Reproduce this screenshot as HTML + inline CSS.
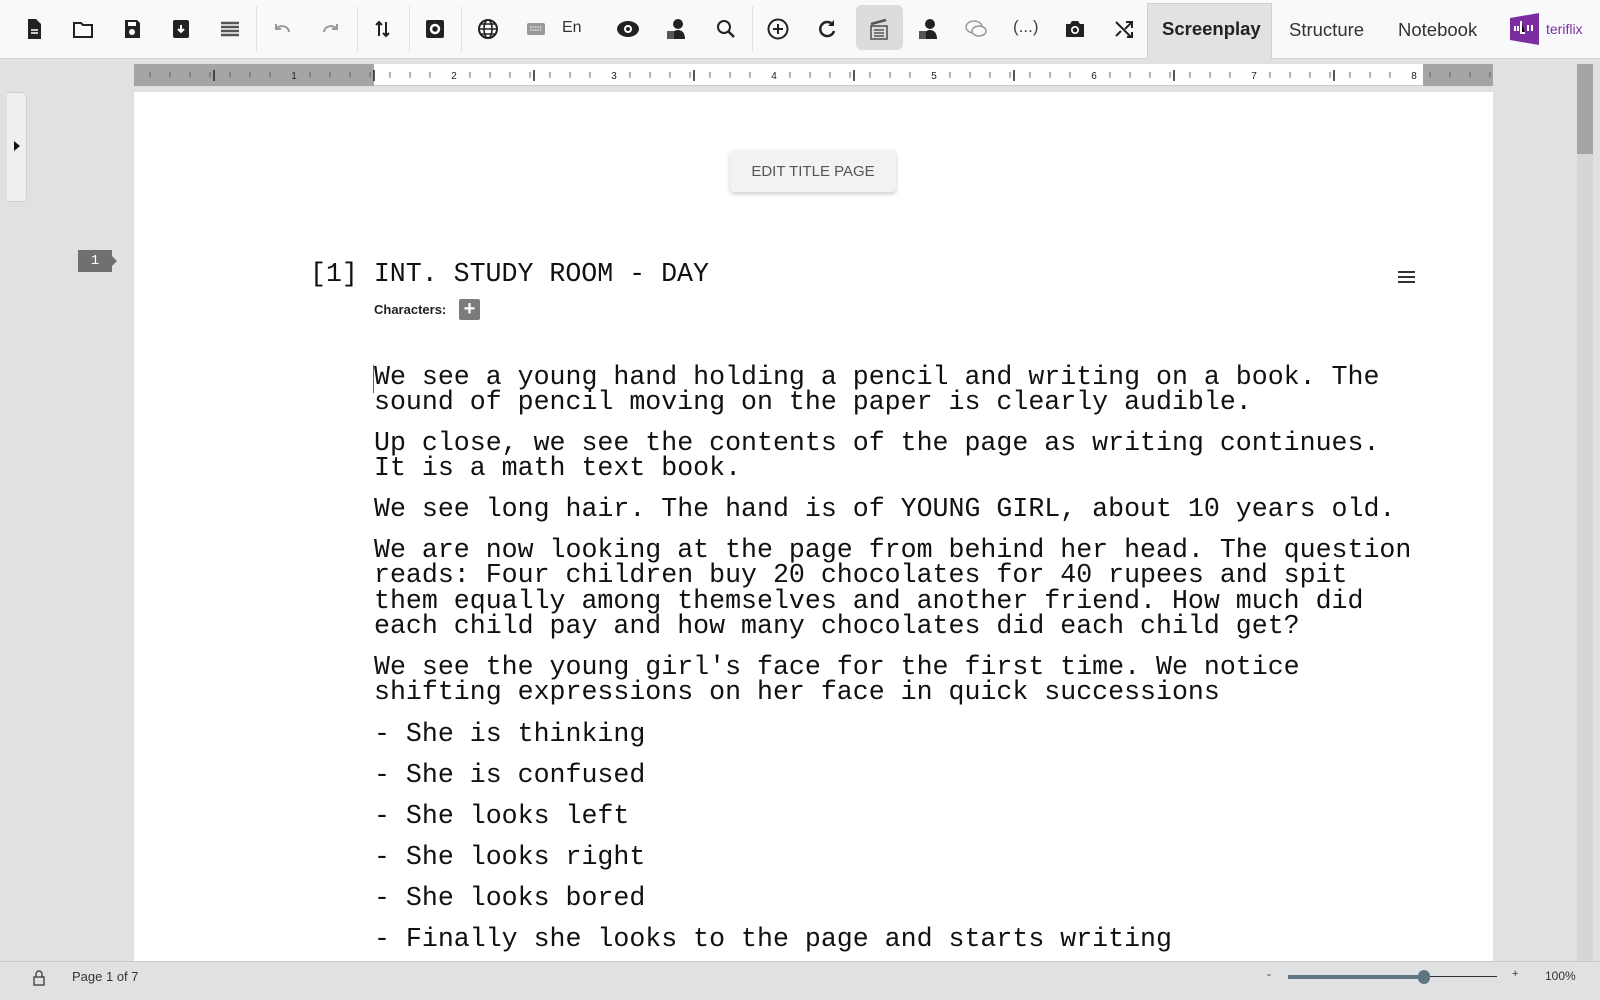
<!DOCTYPE html>
<html><head><meta charset="utf-8"><style>
*{margin:0;padding:0;box-sizing:border-box}
body{width:1600px;height:1000px;overflow:hidden;background:#e0e1e3;font-family:"Liberation Sans",sans-serif;position:relative}
.tb{position:absolute;left:0;top:0;width:1600px;height:59px;background:#f8f9fa;border-bottom:1px solid #d4d4d4}
.ic{position:absolute;top:17px;width:24px;height:24px}
.sep{position:absolute;top:6px;width:1px;height:46px;background:#e2e2e2}
.mono{font-family:"Liberation Mono",monospace;font-size:26.6px;color:#111}
.p{position:absolute;left:374px;white-space:pre;line-height:25.3px}
</style></head><body>
<div class="tb">
<svg class="ic" style="left:22px" viewBox="0 0 24 24"><path d="M6 2h8l5 5v15H6z" fill="#222"/><path d="M9 13h7M9 16h7" stroke="#fff" stroke-width="1.5"/></svg>
<svg class="ic" style="left:71px" viewBox="0 0 24 24"><path d="M3 6h7l2 2h9v12H3z" fill="none" stroke="#222" stroke-width="2"/></svg>
<svg class="ic" style="left:120px" viewBox="0 0 24 24"><path d="M5 3h12l3 3v15H5z" fill="#222"/><circle cx="12" cy="15" r="3" fill="#fff"/><rect x="8" y="5" width="8" height="4" fill="#fff"/></svg>
<svg class="ic" style="left:169px" viewBox="0 0 24 24"><rect x="4" y="3" width="16" height="18" rx="2" fill="#222"/><path d="M12 8v7M9 12l3 3 3-3" stroke="#fff" stroke-width="2" fill="none"/></svg>
<svg class="ic" style="left:218px" viewBox="0 0 24 24"><path d="M3 6h18M3 10h18M3 14h18M3 18h18" stroke="#555" stroke-width="2.5"/></svg>
<div class="sep" style="left:256px"></div>
<svg class="ic" style="left:270px" viewBox="0 0 24 24"><path d="M6 12a7 6 0 0 1 13 3M6 7v5h5" stroke="#999" stroke-width="2" fill="none"/></svg>
<svg class="ic" style="left:319px" viewBox="0 0 24 24"><path d="M18 12a7 6 0 0 0-13 3M18 7v5h-5" stroke="#999" stroke-width="2" fill="none"/></svg>
<div class="sep" style="left:357px"></div>
<svg class="ic" style="left:371px" viewBox="0 0 24 24"><path d="M8 19V5M5 8l3-3 3 3M15 5v14M12 16l3 3 3-3" stroke="#222" stroke-width="2" fill="none"/></svg>
<div class="sep" style="left:409px"></div>
<svg class="ic" style="left:423px" viewBox="0 0 24 24"><rect x="3" y="3" width="18" height="18" rx="2" fill="#222"/><circle cx="12" cy="12" r="4" fill="none" stroke="#fff" stroke-width="2.5"/></svg>
<div class="sep" style="left:461px"></div>
<svg class="ic" style="left:476px" viewBox="0 0 24 24"><circle cx="12" cy="12" r="9" fill="none" stroke="#222" stroke-width="2"/><ellipse cx="12" cy="12" rx="4" ry="9" fill="none" stroke="#222" stroke-width="1.6"/><path d="M3 12h18M5 7h14M5 17h14" stroke="#222" stroke-width="1.6"/></svg>
<svg class="ic" style="left:524px" viewBox="0 0 24 24"><rect x="3" y="6" width="18" height="12" rx="2" fill="#999"/><path d="M6 10h12M6 13h12" stroke="#fff" stroke-width="1" stroke-dasharray="1.5 1"/></svg>
<div style="position:absolute;left:562px;top:19px;font-size:16px;color:#333">En</div>
<svg class="ic" style="left:616px" viewBox="0 0 24 24"><ellipse cx="12" cy="12" rx="11" ry="8" fill="#222"/><circle cx="12" cy="12" r="4" fill="#fff"/><circle cx="12" cy="12" r="2" fill="#222"/></svg>
<svg class="ic" style="left:664px" viewBox="0 0 24 24"><circle cx="14" cy="7" r="5" fill="#222"/><path d="M7 22c0-6 3-9 7-9s7 3 7 9z" fill="#222"/><rect x="3" y="14" width="7" height="8" fill="#555"/></svg>
<svg class="ic" style="left:714px" viewBox="0 0 24 24"><circle cx="10" cy="10" r="6" fill="none" stroke="#222" stroke-width="2"/><path d="M14 14l6 6" stroke="#222" stroke-width="2.5"/></svg>
<div class="sep" style="left:752px"></div>
<svg class="ic" style="left:766px" viewBox="0 0 24 24"><circle cx="12" cy="12" r="9.5" fill="none" stroke="#222" stroke-width="2"/><path d="M12 7v10M7 12h10" stroke="#222" stroke-width="2"/></svg>
<svg class="ic" style="left:815px" viewBox="0 0 24 24"><path d="M18 8a7 7 0 1 0 1 6" stroke="#222" stroke-width="2.5" fill="none"/><path d="M19 3v6h-6z" fill="#222"/></svg>
<div style="position:absolute;left:856px;top:5px;width:47px;height:45px;background:#dcdcdc;border-radius:6px"></div>
<svg class="ic" style="left:867px" viewBox="0 0 24 24"><rect x="4" y="9" width="16" height="13" fill="none" stroke="#555" stroke-width="1.6"/><path d="M7 13h10M7 16h10M7 19h10" stroke="#555" stroke-width="1.4"/><path d="M4 7l15-4" stroke="#555" stroke-width="2.5"/></svg>
<svg class="ic" style="left:916px" viewBox="0 0 24 24"><circle cx="14" cy="7" r="5" fill="#222"/><path d="M7 22c0-6 3-9 7-9s7 3 7 9z" fill="#222"/><rect x="3" y="14" width="7" height="8" fill="#555"/></svg>
<svg class="ic" style="left:964px" viewBox="0 0 24 24"><ellipse cx="10" cy="10" rx="8" ry="6" fill="none" stroke="#999" stroke-width="1.5"/><ellipse cx="15" cy="14" rx="7" ry="5" fill="#f8f9fa" stroke="#999" stroke-width="1.5"/></svg>
<div style="position:absolute;left:1013px;top:17px;font-size:17px;color:#444">(...)</div>
<svg class="ic" style="left:1063px" viewBox="0 0 24 24"><path d="M3 7h4l2-3h6l2 3h4v13H3z" fill="#222"/><circle cx="12" cy="13" r="4" fill="#fff"/><circle cx="12" cy="13" r="2.3" fill="#222"/></svg>
<svg class="ic" style="left:1112px" viewBox="0 0 24 24"><path d="M4 5l15 15M14 5h6v6M20 5L13 12M4 19l5-5M15 20h5v-5" stroke="#222" stroke-width="2" fill="none"/></svg>
<div style="position:absolute;left:1147px;top:3px;width:125px;height:56px;background:#e2e2e2;border:1px solid #d0d0d0;border-bottom:none"></div>
<div style="position:absolute;left:1162px;top:18px;font-size:18.5px;font-weight:bold;color:#222">Screenplay</div>
<div style="position:absolute;left:1289px;top:19px;font-size:18.5px;color:#333">Structure</div>
<div style="position:absolute;left:1398px;top:19px;font-size:18.5px;color:#333">Notebook</div>
<svg style="position:absolute;left:1510px;top:13px" width="29" height="32" viewBox="0 0 29 32"><path d="M0 5L29 0v32L0 27z" fill="#7c2ea1"/><path d="M5 13v5M8 13v5M11 8v12h4M18 12v6M22 12v6" stroke="#fff" stroke-width="2"/></svg>
<div style="position:absolute;left:1546px;top:21px;font-size:14px;color:#7c2ea1">teriflix</div>
</div>
<!-- ruler -->
<div style="position:absolute;left:134px;top:64px;width:1359px;height:22px;background:#fff;border-bottom:1px solid #ccc"></div>
<div style="position:absolute;left:134px;top:64px;width:240px;height:22px;background:#a4a5a7"></div>
<div style="position:absolute;left:1423px;top:64px;width:70px;height:22px;background:#a4a5a7"></div>
<svg style="position:absolute;left:134px;top:64px" width="1359" height="22">
<defs><pattern id="tk" x="0" y="0" width="20" height="22" patternUnits="userSpaceOnUse"><path d="M16 8v6" stroke="#666" stroke-width="1"/></pattern></defs>
<rect x="0" y="0" width="1359" height="22" fill="url(#tk)"/>
<g stroke="#222" stroke-width="1.5"><path d="M80 6v11M240 6v11M400 6v11M560 6v11M720 6v11M880 6v11M1040 6v11M1200 6v11"/></g>
<g font-size="10" fill="#222" font-family="Liberation Sans" text-anchor="middle">
<g fill="#fff"><rect x="154" y="4" width="12" height="13"/><rect x="314" y="4" width="12" height="13"/><rect x="474" y="4" width="12" height="13"/><rect x="634" y="4" width="12" height="13"/><rect x="794" y="4" width="12" height="13"/><rect x="954" y="4" width="12" height="13"/><rect x="1114" y="4" width="12" height="13"/><rect x="1274" y="4" width="12" height="13"/></g>
<rect x="154" y="4" width="12" height="13" fill="#a4a5a7"/>
<text x="160" y="15">1</text><text x="320" y="15">2</text><text x="480" y="15">3</text><text x="640" y="15">4</text><text x="800" y="15">5</text><text x="960" y="15">6</text><text x="1120" y="15">7</text><text x="1280" y="15">8</text>
</g></svg>
<!-- scrollbar -->
<div style="position:absolute;left:1577px;top:64px;width:16px;height:897px;background:#d6d6d8"></div>
<div style="position:absolute;left:1577px;top:64px;width:16px;height:90px;background:#a3a4a6"></div>
<!-- page -->
<div style="position:absolute;left:134px;top:92px;width:1359px;height:869px;background:#fff"></div>
<div style="position:absolute;left:7px;top:92px;width:20px;height:110px;background:#eeeff1;border:1px solid #d0d0d0;border-left:none;border-radius:0 5px 5px 0"></div>
<div style="position:absolute;left:14px;top:141px;border-left:6px solid #111;border-top:5px solid transparent;border-bottom:5px solid transparent"></div>
<div style="position:absolute;left:78px;top:250px;width:34px;height:22px;background:#6f7072;color:#fff;font-family:'Liberation Mono',monospace;font-size:14px;line-height:22px;text-align:center">1</div>
<div style="position:absolute;left:112px;top:256px;border-left:5px solid #6f7072;border-top:5px solid transparent;border-bottom:5px solid transparent"></div>
<div style="position:absolute;left:730px;top:150px;width:166px;height:42px;background:#f1f2f4;border-radius:4px;box-shadow:0 2px 4px rgba(0,0,0,.2);font-size:15px;color:#555;text-align:center;line-height:44px">EDIT TITLE PAGE</div>
<div class="mono p" style="left:310px;top:262px">[1] INT. STUDY ROOM - DAY</div>
<div style="position:absolute;left:1398px;top:271px;width:17px;height:2px;background:#333;box-shadow:0 5px 0 #333,0 10px 0 #333"></div>
<div style="position:absolute;left:374px;top:302px;font-size:13px;font-weight:bold;color:#222">Characters:</div>
<div style="position:absolute;left:459px;top:299px;width:21px;height:21px;background:#7a7b7d;border-radius:2px;color:#fff;font-size:20px;line-height:21px;text-align:center;font-weight:bold">+</div>
<div style="position:absolute;left:373px;top:365px;width:1px;height:28px;background:#666"></div>
<div class="mono p" style="top:365px">We see a young hand holding a pencil and writing on a book. The
sound of pencil moving on the paper is clearly audible.</div>
<div class="mono p" style="top:431px">Up close, we see the contents of the page as writing continues.
It is a math text book.</div>
<div class="mono p" style="top:497px">We see long hair. The hand is of YOUNG GIRL, about 10 years old.</div>
<div class="mono p" style="top:538px">We are now looking at the page from behind her head. The question
reads: Four children buy 20 chocolates for 40 rupees and spit
them equally among themselves and another friend. How much did
each child pay and how many chocolates did each child get?</div>
<div class="mono p" style="top:655px">We see the young girl's face for the first time. We notice
shifting expressions on her face in quick successions</div>
<div class="mono p" style="top:722px">- She is thinking</div>
<div class="mono p" style="top:763px">- She is confused</div>
<div class="mono p" style="top:804px">- She looks left</div>
<div class="mono p" style="top:845px">- She looks right</div>
<div class="mono p" style="top:886px">- She looks bored</div>
<div class="mono p" style="top:927px">- Finally she looks to the page and starts writing</div>
<!-- footer -->
<div style="position:absolute;left:0;top:961px;width:1600px;height:39px;background:#e0e1e3;border-top:1px solid #c8c8c8"></div>
<svg style="position:absolute;left:32px;top:969px" width="14" height="18" viewBox="0 0 14 18"><rect x="2" y="8" width="10" height="8" fill="none" stroke="#444" stroke-width="1.4"/><path d="M4 8V5a3 3 0 0 1 6 0v3" fill="none" stroke="#444" stroke-width="1.4"/></svg>
<div style="position:absolute;left:72px;top:969px;font-size:13px;color:#333">Page 1 of 7</div>
<div style="position:absolute;left:1267px;top:967px;font-size:12px;color:#333">-</div>
<div style="position:absolute;left:1288px;top:975px;width:136px;height:4px;background:#5e7582"></div>
<div style="position:absolute;left:1424px;top:976px;width:73px;height:1px;background:#333"></div>
<div style="position:absolute;left:1418px;top:970px;width:12px;height:14px;border-radius:6px;background:#5e7582"></div>
<div style="position:absolute;left:1512px;top:968px;font-size:11px;color:#333">+</div>
<div style="position:absolute;left:1545px;top:969px;font-size:12px;color:#333">100%</div>
</body></html>
